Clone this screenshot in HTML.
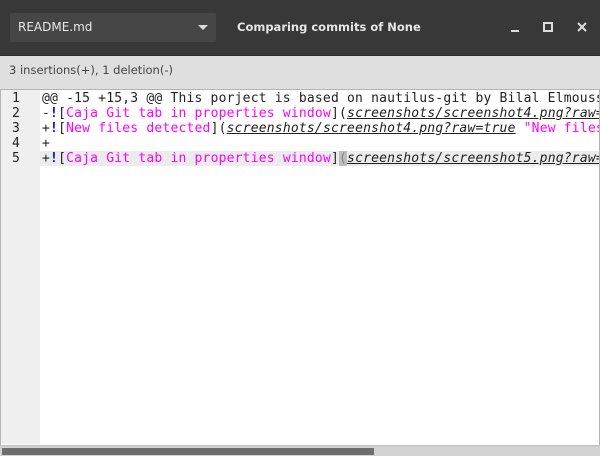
<!DOCTYPE html>
<html><head><style>
*{margin:0;padding:0;box-sizing:border-box}
body{width:600px;height:456px;overflow:hidden;background:#dfdfdf;font-family:"Liberation Sans","DejaVu Sans",sans-serif;position:relative}
#hdr{position:absolute;left:0;top:0;width:600px;height:56px;background:#383838;border-bottom:1px solid #2a2a2a}
#dd{position:absolute;left:10px;top:13px;width:206px;height:29px;background:#464646;border-radius:2px;color:#e8e8e8;font-family:"DejaVu Sans",sans-serif;font-size:12px;line-height:29px;padding-left:8px}
#dd .arr{position:absolute;right:8px;top:12px;width:0;height:0;border-left:5px solid transparent;border-right:5px solid transparent;border-top:5px solid #ddd}
#title{position:absolute;left:237px;top:20px;color:#e6e6e6;font-family:"DejaVu Sans",sans-serif;font-weight:bold;font-size:11.5px}
#bar{position:absolute;left:0;top:56px;width:600px;height:34px;color:#444;font-family:"DejaVu Sans",sans-serif;font-size:11.5px;line-height:28px;padding-left:9px}
#ed{position:absolute;left:0;top:89px;width:600px;height:357px;background:#fff;border:1px solid #b4b4b4;border-bottom:none;overflow:hidden}
#gut{position:absolute;left:0;top:0;width:39px;height:354px;background:#efefef}
.ln{position:absolute;left:0;width:600px;height:15px;font-family:"DejaVu Sans Mono",monospace;font-size:13px;letter-spacing:0.2px;line-height:15px;white-space:pre;color:#222}
.ln .n{position:absolute;left:11px;top:0;color:#222}
.ln .t{position:absolute;left:41px;top:0}
.m{color:#f0f}.b{color:#00f;font-weight:bold}.u{text-decoration:underline;font-style:italic}
.hl{background:#ececec;left:39px;width:560px}
#sb{position:absolute;left:0;top:445px;width:600px;height:11px;background:#d2d2d2;border-top:1px solid #bdbdbd}
#th{position:absolute;left:2px;top:2px;width:372px;height:7px;background:#6e6e6e}
</style></head><body>
<div id="hdr">
<div id="dd">README.md<div class="arr"></div></div>
<div id="title">Comparing commits of None</div>
<svg style="position:absolute;left:505px;top:22px" width="90" height="12">
<rect x="6" y="8" width="8" height="2" fill="#ddd"/>
<rect x="39" y="1" width="8" height="8" fill="none" stroke="#ddd" stroke-width="2"/>
<path d="M73 1 L81 9 M81 1 L73 9" stroke="#ddd" stroke-width="2"/>
</svg>
</div>
<div id="bar">3 insertions(+),  1 deletion(-)</div>
<div id="ed">
<div id="gut"></div>
<div class="ln hl" style="top:61px"></div>
<div class="ln" style="top:1px"><span class="n">1</span><span class="t">@@ -15 +15,3 @@ This porject is based on nautilus-git by Bilal Elmoussaoui</span></div>
<div class="ln" style="top:16px"><span class="n">2</span><span class="t">-<span class="b">!</span>[<span class="m">Caja Git tab in properties window</span>](<span class="u">screenshots/screenshot4.png?raw=true</span></span></div>
<div class="ln" style="top:31px"><span class="n">3</span><span class="t">+<span class="b">!</span>[<span class="m">New files detected</span>](<span class="u">screenshots/screenshot4.png?raw=true</span> <span class="m">"New files</span></span></div>
<div class="ln" style="top:46px"><span class="n">4</span><span class="t">+</span></div>
<div class="ln" style="top:61px"><span class="n">5</span><span class="t">+<span class="b">!</span>[<span class="m">Caja Git tab in properties window</span>]<span style="background:#bdbdbd;color:#888">(</span><span class="u">screenshots/screenshot5.png?raw=true</span></span></div>
</div>
<div id="sb"><div id="th"></div></div>
</body></html>
